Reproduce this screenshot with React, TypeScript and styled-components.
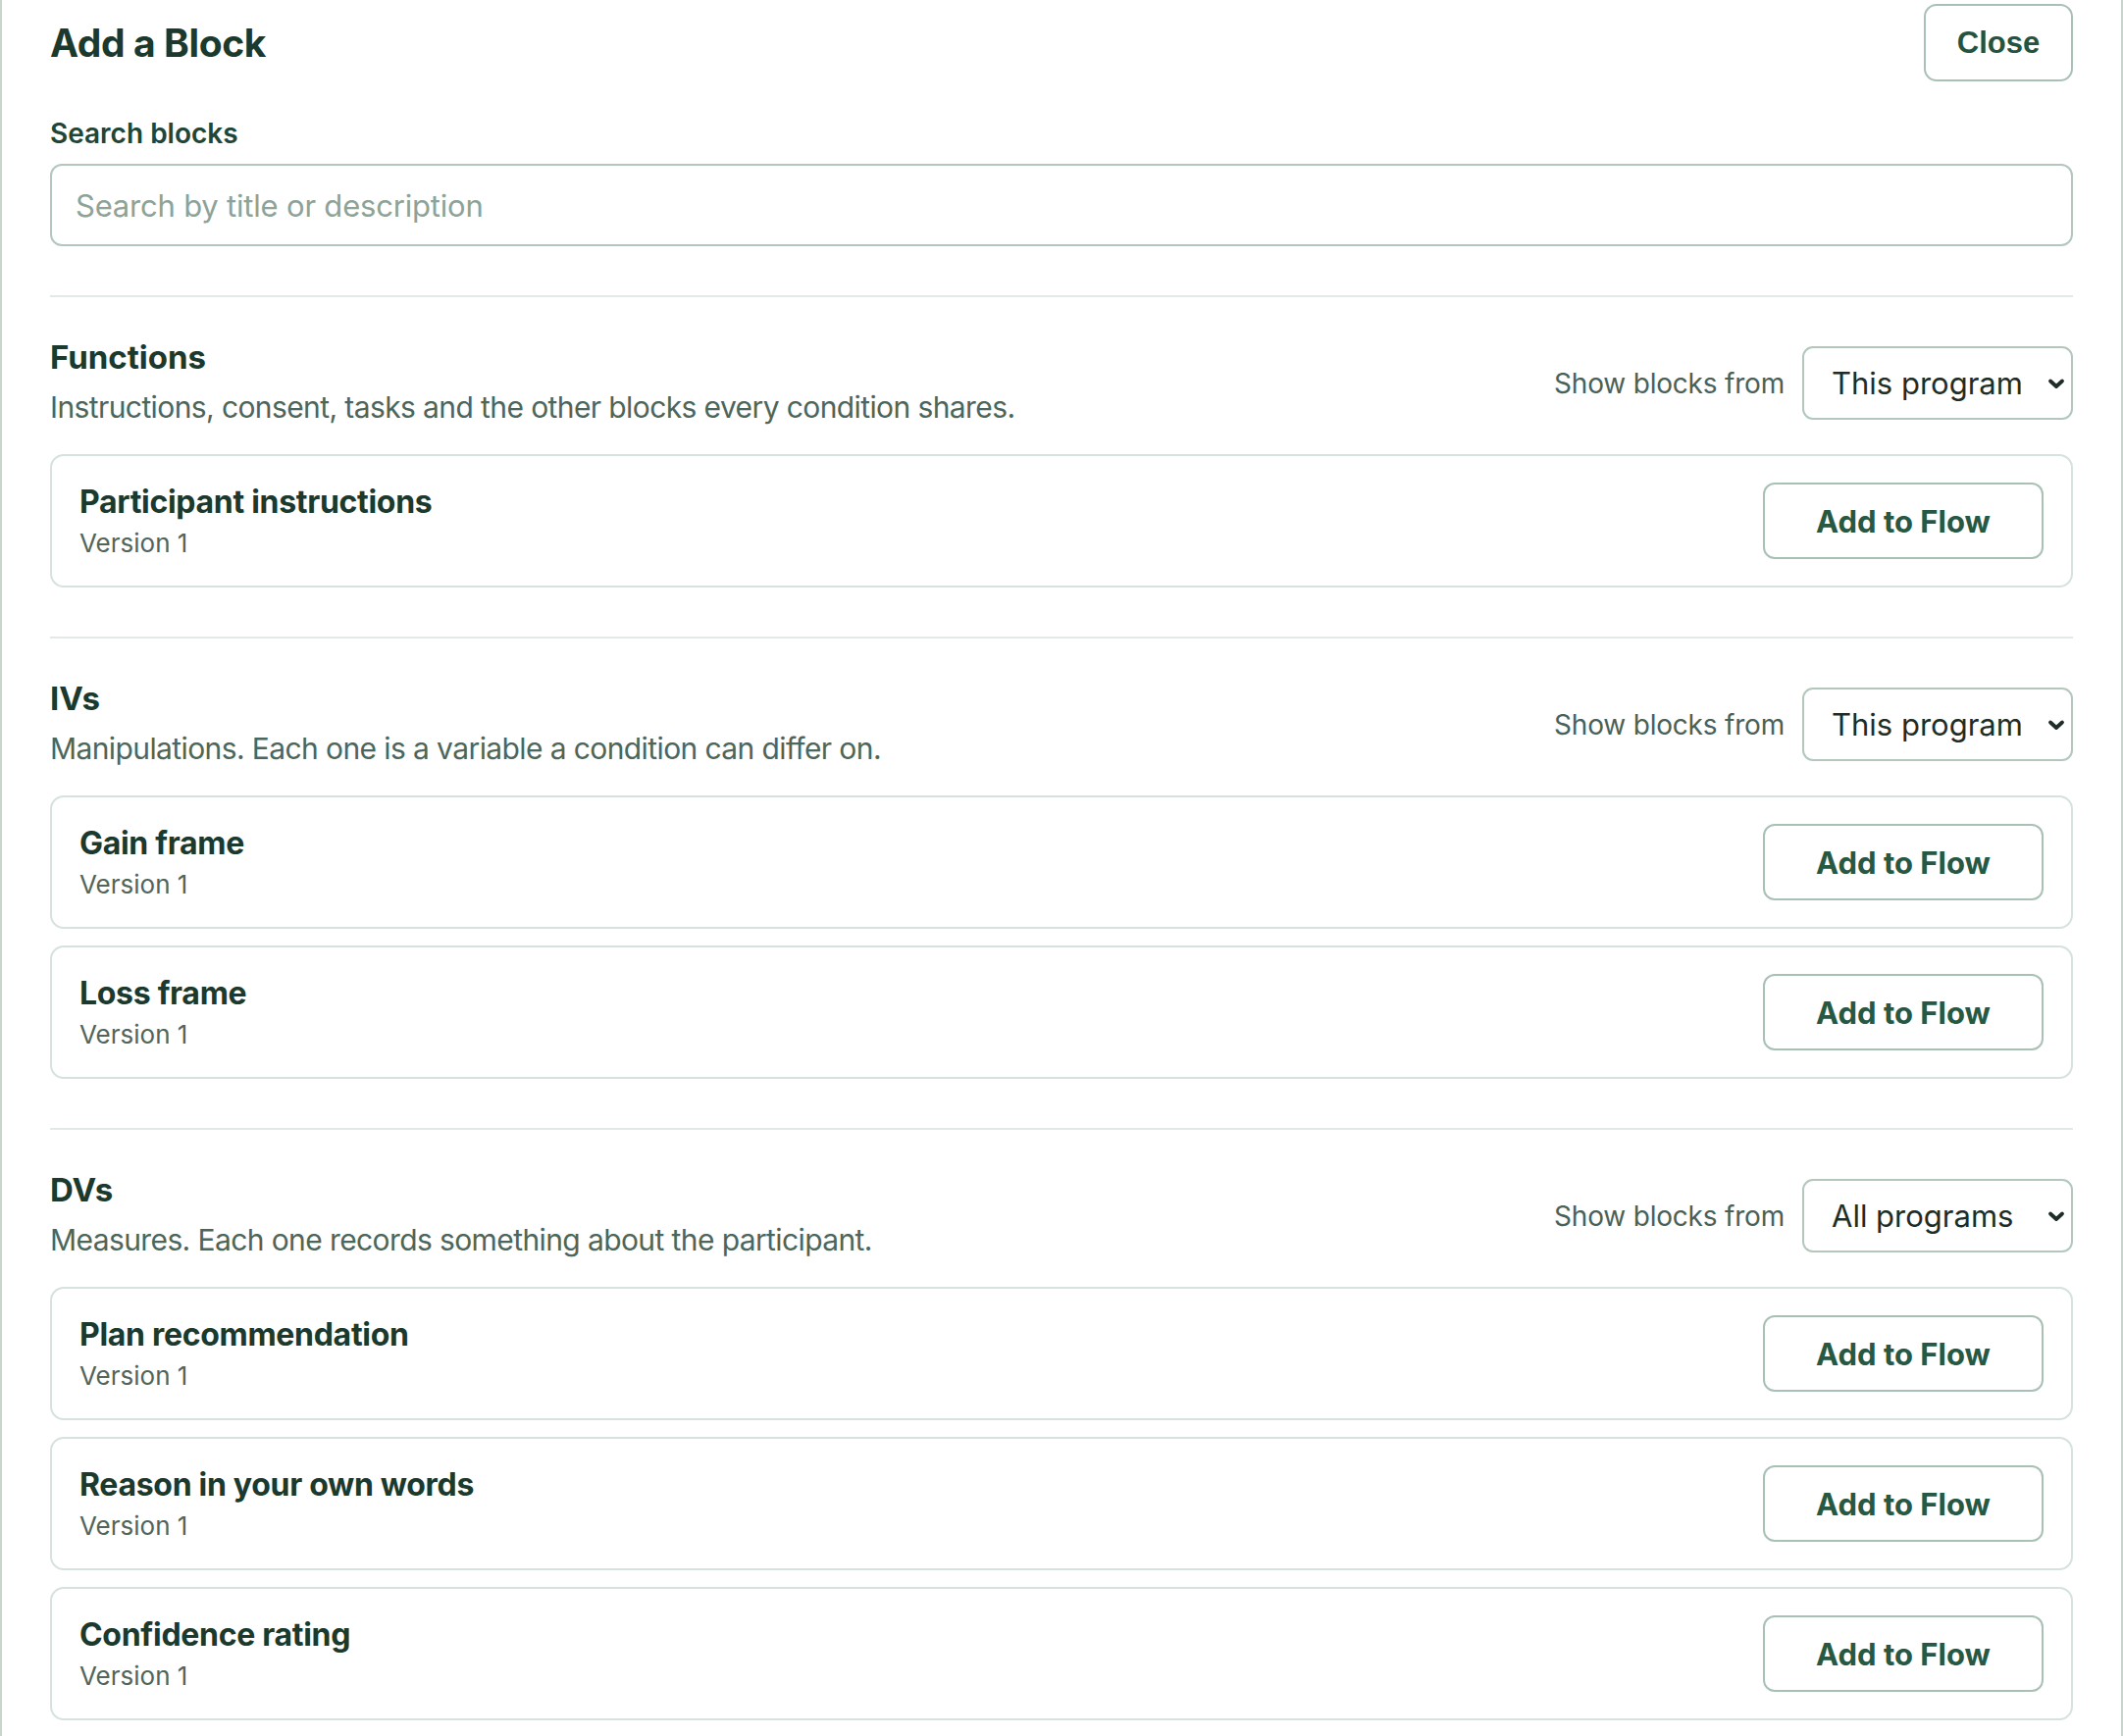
import React from 'react';
import styled, { createGlobalStyle } from 'styled-components';

const GlobalStyle = createGlobalStyle`
    html, body {
        margin: 0;
        padding: 0;
        background: #fff;
    }
    body {
        font-family: Inter, "Noto Sans", "Liberation Sans", sans-serif;
        color: #1d3a2f;
    }
    * {
        box-sizing: border-box;
    }
`;

const Panel = styled.div`
    width: 2164px;
    min-height: 1770px;
    padding: 4px 49px 40px 49px;
    border-left: 2px solid #c6d6cd;
    border-right: 2px solid #c6d6cd;
    background: #fff;
`;

const TopBar = styled.div`
    display: flex;
    align-items: center;
    justify-content: space-between;
`;

const Title = styled.h1`
    margin: 0;
    font-size: 39px;
    font-weight: 700;
    letter-spacing: -0.4px;
    color: #1b392d;
`;

const CloseButton = styled.button`
    width: 152px;
    height: 79px;
    border: 2px solid #a9c1b5;
    border-radius: 13px;
    background: #fff;
    font-family: "Liberation Sans", Arial, sans-serif;
    font-size: 31px;
    font-weight: 700;
    color: #24543f;
    cursor: pointer;
`;

const FieldLabel = styled.label`
    display: block;
    margin-top: 36px;
    font-size: 28px;
    line-height: 34px;
    font-weight: 600;
    color: #214536;
`;

const SearchInput = styled.input`
    display: block;
    width: 100%;
    height: 84px;
    margin-top: 14px;
    padding: 0 24px;
    border: 2px solid #b3c7bc;
    border-radius: 12px;
    font-family: inherit;
    font-size: 31px;
    letter-spacing: -0.2px;
    color: #1d3a2f;
    outline: none;
    &::placeholder {
        color: #8ea298;
    }
`;

const Section = styled.section`
    margin-top: 50px;
    padding-top: 41px;
    border-top: 2px solid #e2eae6;
`;

const SectionHead = styled.div`
    display: flex;
    align-items: center;
    justify-content: space-between;
`;

const SectionTitle = styled.h2`
    margin: 0;
    font-size: 33px;
    line-height: 40px;
    font-weight: 700;
    color: #1b392d;
`;

const SectionDesc = styled.p`
    margin: 9px 0 0 0;
    font-size: 30px;
    line-height: 44px;
    letter-spacing: -0.6px;
    color: #4d665b;
`;

const SourcePicker = styled.div`
    display: flex;
    align-items: center;
    gap: 18px;
`;

const SourceLabel = styled.span`
    font-size: 28px;
    letter-spacing: -0.2px;
    color: #4a6158;
`;

const SelectWrap = styled.div`
    position: relative;
    width: 276px;
    height: 75px;
`;

const Select = styled.select`
    appearance: none;
    width: 100%;
    height: 100%;
    padding: 0 40px 0 28px;
    border: 2px solid #b3c7bc;
    border-radius: 11px;
    background: #fff;
    font-family: inherit;
    font-size: 31px;
    color: #1e2e27;
    outline: none;
`;

const Chevron = styled.svg`
    position: absolute;
    right: 7px;
    top: 50%;
    width: 20px;
    height: 14px;
    margin-top: -7px;
    pointer-events: none;
`;

const CardList = styled.div`
    display: flex;
    flex-direction: column;
    gap: 17px;
    margin-top: 26px;
`;

const Card = styled.div`
    display: flex;
    align-items: center;
    justify-content: space-between;
    padding: 27px 28px 27px 28px;
    border: 2px solid #d6e2dc;
    border-radius: 14px;
    background: #fff;
`;

const CardTitle = styled.div`
    font-size: 32px;
    line-height: 40px;
    font-weight: 700;
    letter-spacing: -0.3px;
    color: #1b392d;
`;

const CardMeta = styled.div`
    margin-top: 6px;
    font-size: 26px;
    line-height: 32px;
    color: #51655b;
`;

const AddButton = styled.button`
    width: 286px;
    height: 78px;
    border: 2px solid #a9c1b5;
    border-radius: 12px;
    background: #fff;
    font-family: inherit;
    font-size: 31px;
    font-weight: 700;
    color: #265844;
    cursor: pointer;
`;

type Block = { title: string; version: number };

type Group = {
    name: string;
    description: string;
    source: string;
    blocks: Block[];
};

const groups: Group[] = [
    {
        name: 'Functions',
        description: 'Instructions, consent, tasks and the other blocks every condition shares.',
        source: 'This program',
        blocks: [{ title: 'Participant instructions', version: 1 }]
    },
    {
        name: 'IVs',
        description: 'Manipulations. Each one is a variable a condition can differ on.',
        source: 'This program',
        blocks: [
            { title: 'Gain frame', version: 1 },
            { title: 'Loss frame', version: 1 }
        ]
    },
    {
        name: 'DVs',
        description: 'Measures. Each one records something about the participant.',
        source: 'All programs',
        blocks: [
            { title: 'Plan recommendation', version: 1 },
            { title: 'Reason in your own words', version: 1 },
            { title: 'Confidence rating', version: 1 }
        ]
    }
];

const SourceSelect = ({ value }: { value: string }) => (
    <SelectWrap>
        <Select defaultValue={value}>
            <option>This program</option>
            <option>All programs</option>
        </Select>
        <Chevron viewBox="0 0 20 14">
            <path d="M4 4.5 L10 10 L16 4.5" fill="none" stroke="#1e2e27" strokeWidth="3.8" strokeLinecap="round" strokeLinejoin="round" />
        </Chevron>
    </SelectWrap>
);

const App = () => (
    <>
        <GlobalStyle />
        <Panel>
            <TopBar>
                <Title>Add a Block</Title>
                <CloseButton>Close</CloseButton>
            </TopBar>

            <FieldLabel htmlFor="block-search">Search blocks</FieldLabel>
            <SearchInput id="block-search" placeholder="Search by title or description" />

            {groups.map(group => (
                <Section key={group.name}>
                    <SectionHead>
                        <div>
                            <SectionTitle>{group.name}</SectionTitle>
                            <SectionDesc>{group.description}</SectionDesc>
                        </div>
                        <SourcePicker>
                            <SourceLabel>Show blocks from</SourceLabel>
                            <SourceSelect value={group.source} />
                        </SourcePicker>
                    </SectionHead>
                    <CardList>
                        {group.blocks.map(block => (
                            <Card key={block.title}>
                                <div>
                                    <CardTitle>{block.title}</CardTitle>
                                    <CardMeta>Version {block.version}</CardMeta>
                                </div>
                                <AddButton>Add to Flow</AddButton>
                            </Card>
                        ))}
                    </CardList>
                </Section>
            ))}
        </Panel>
    </>
);

export default App;
